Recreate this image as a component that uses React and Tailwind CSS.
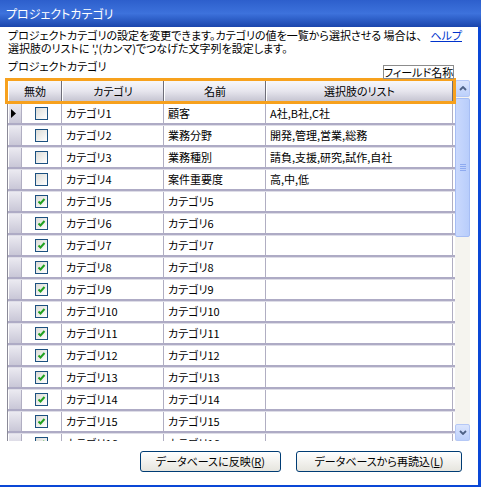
import React from 'react'

const rows = [
  { cat: 'カテゴリ1', name: '顧客', list: 'A社,B社,C社', off: false },
  { cat: 'カテゴリ2', name: '業務分野', list: '開発,管理,営業,総務', off: false },
  { cat: 'カテゴリ3', name: '業務種別', list: '請負,支援,研究,試作,自社', off: false },
  { cat: 'カテゴリ4', name: '案件重要度', list: '高,中,低', off: false },
]
for (let i = 5; i <= 16; i++) rows.push({ cat: 'カテゴリ' + i, name: 'カテゴリ' + i, list: '', off: true })

function Check({ on }) {
  return (
    <div className="w-[13px] h-[13px] border border-[#1c5180] bg-gradient-to-br from-[#dcdcd7] to-white flex items-center justify-center">
      {on && (
        <svg width="9" height="9" viewBox="0 0 9 9">
          <path d="M1.5 4.5 L3.5 6.5 L7.5 2" fill="none" stroke="#21a121" strokeWidth="2" />
        </svg>
      )}
    </div>
  )
}

function Arrow({ up }) {
  return (
    <svg width="8" height="5" viewBox="0 0 8 5">
      <path d={up ? 'M1 4 L4 1 L7 4' : 'M1 1 L4 4 L7 1'} fill="none" stroke="#4d6185" strokeWidth="1.8" />
    </svg>
  )
}

function HeadCell({ w, children }) {
  return (
    <div className={`${w} h-full flex items-center justify-center border-r border-[#6e6d78] border-l border-l-white bg-gradient-to-b from-[#f7f7fa] via-[#e7e6ee] to-[#c6c5d2]`}>
      {children}
    </div>
  )
}

export default function App() {
  return (
    <div className="w-[481px] h-[487px] bg-white flex flex-col overflow-hidden relative text-[11px] text-black font-['Noto_Sans_CJK_JP',sans-serif] [font-feature-settings:'palt']">
      <div className="h-[27px] shrink-0 flex items-center pl-[6px] text-white text-[12px] bg-gradient-to-b from-[#2d5fcc] via-[#3d72dc] to-[#1a45ad]">
        プロジェクトカテゴリ
      </div>

      <div className="flex-1 flex flex-col border-r-[3px] border-b-2 border-[#0a47d6]">
        <div className="flex pl-[8px] pt-[2px] leading-[13px]">
          <div className="flex-1">
            <div className="whitespace-nowrap">プロジェクトカテゴリの設定を変更できます。カテゴリの値を一覧から選択させる 場合は、</div>
            <div className="whitespace-nowrap">選択肢のリストに ','(カンマ)でつなげた文字列を設定します。</div>
          </div>
          <span className="text-[#0033cc] underline mr-[16px]">ヘルプ</span>
        </div>
        <div className="pl-[8px] mt-[5px] leading-[12px] h-[12px]">プロジェクトカテゴリ</div>

        <div className="ml-[7px] mt-[8px] w-[464px] h-[361px] border-l border-[#8b8a98] flex overflow-hidden">
          <div className="w-[447px] flex flex-col">
            <div className="h-[23px] shrink-0 flex pt-[1px] pb-[2px] bg-[#c6c5d2]">
              <HeadCell w="w-[54px]">無効</HeadCell>
              <HeadCell w="w-[102px]">カテゴリ</HeadCell>
              <HeadCell w="w-[102px]">名前</HeadCell>
              <HeadCell w="w-[187px]">選択肢のリスト</HeadCell>
            </div>
            {rows.map((r, i) => (
              <div key={i} className="h-[22px] shrink-0 flex border-t border-[#deddE7] border-b-2 border-b-[#aeabc5]">
                <div className="w-[14px] h-full flex items-center pl-[2px] border-r border-[#b0aec2] border-l border-l-white bg-gradient-to-b from-[#ebeaf1] to-[#c9c7d7]">
                  {i === 0 && (
                    <svg width="5" height="9" viewBox="0 0 5 9"><path d="M0 0 L5 4.5 L0 9 Z" fill="#000" /></svg>
                  )}
                </div>
                <div className="w-[40px] flex items-center justify-center border-r border-[#b0aec2]">
                  <Check on={r.off} />
                </div>
                <div className="w-[102px] flex items-center pl-[4px] border-r border-[#b0aec2] whitespace-nowrap">{r.cat}</div>
                <div className="w-[102px] flex items-center pl-[4px] border-r border-[#b0aec2] whitespace-nowrap">{r.name}</div>
                <div className="w-[187px] flex items-center pl-[4px] border-r border-[#b0aec2] whitespace-nowrap">{r.list}</div>
              </div>
            ))}
          </div>

          <div className="w-[15px] flex flex-col bg-[#f5f4ef]">
            <div className="h-[17px] shrink-0 flex items-center justify-center rounded-[2px] border border-[#b5c8f6] bg-gradient-to-b from-[#dbe5fd] to-[#bcd0fb]">
              <Arrow up />
            </div>
            <div className="h-[139px] mt-[1px] shrink-0 rounded-[2px] border border-[#a6bdf4] bg-gradient-to-r from-[#cad9fd] to-[#b8cdfb] flex flex-col items-center justify-center gap-[1px]">
              <div className="w-[6px] h-[1px] bg-[#8eaaf0]" />
              <div className="w-[6px] h-[1px] bg-[#8eaaf0]" />
              <div className="w-[6px] h-[1px] bg-[#8eaaf0]" />
              <div className="w-[6px] h-[1px] bg-[#8eaaf0]" />
            </div>
            <div className="flex-1" />
            <div className="h-[17px] shrink-0 flex items-center justify-center rounded-[2px] border border-[#b5c8f6] bg-gradient-to-b from-[#dbe5fd] to-[#bcd0fb]">
              <Arrow />
            </div>
          </div>
        </div>

        <div className="flex justify-end gap-[15px] mt-[10px] pr-[16px]">
          <button className="w-[141px] h-[21px] rounded-[3px] border border-[#003c74] bg-gradient-to-b from-white to-[#e6e5de] text-[11px]">
            データベースに反映(<span className="underline">R</span>)
          </button>
          <button className="w-[166px] h-[21px] rounded-[3px] border border-[#003c74] bg-gradient-to-b from-white to-[#e6e5de] text-[11px]">
            データベースから再読込(<span className="underline">L</span>)
          </button>
        </div>
      </div>

      <div className="absolute left-[5px] top-[78px] w-[451px] h-[26px] border-[3px] border-[#f7a11d]" />
      <div className="absolute left-[383px] top-[65px] w-[71px] h-[14px] bg-white border border-[#8c8c8c] flex items-center justify-center leading-none text-[11px] whitespace-nowrap">
        フィールド名称
      </div>
    </div>
  )
}
